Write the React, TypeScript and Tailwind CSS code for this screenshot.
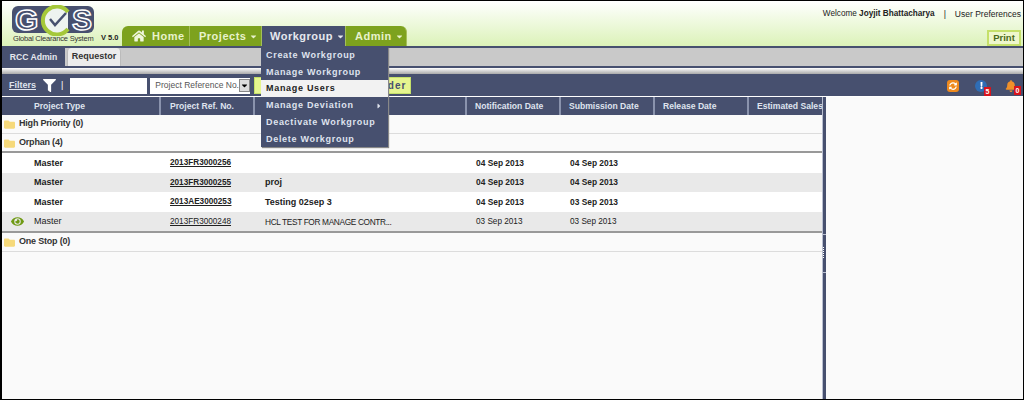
import { FaBell, FaCaretDown, FaCaretRight, FaExclamation, FaEye, FaFilter, FaFolder, FaHome, FaSyncAlt } from 'react-icons/fa';

const menuItems = ['Create Workgroup', 'Manage Workgroup', 'Manage Users', 'Manage Deviation', 'Deactivate Workgroup', 'Delete Workgroup'];

const columns = ['Project Type', 'Project Ref. No.', '', 'Notification Date', 'Submission Date', 'Release Date', 'Estimated Sales'];

const rows = [
  { type: 'Master', ref: '2013FR3000256', title: '', notified: '04 Sep 2013', submitted: '04 Sep 2013', bold: true },
  { type: 'Master', ref: '2013FR3000255', title: 'proj', notified: '04 Sep 2013', submitted: '04 Sep 2013', bold: true },
  { type: 'Master', ref: '2013AE3000253', title: 'Testing 02sep 3', notified: '04 Sep 2013', submitted: '03 Sep 2013', bold: true },
  { type: 'Master', ref: '2013FR3000248', title: 'HCL TEST FOR MANAGE CONTR...', notified: '03 Sep 2013', submitted: '03 Sep 2013', bold: false, seen: true },
];

const gridCols = 'grid grid-cols-[159px_94px_212px_94px_94px_94px_73px]';

function Logo() {
  return (
    <div className="w-[94px] pl-[10px] pt-[5px] shrink-0">
      <div className="relative w-[82px] h-[27px] bg-[#47506f] rounded-[6px] flex items-center justify-between pl-[3px] pr-[2px] text-transparent font-bold text-[30px] leading-none [-webkit-text-stroke:1.5px_#fff]">
        <span>G</span>
        <span>S</span>
        <svg className="absolute left-[27px] -top-[1px]" width="33" height="31" viewBox="0 0 33 31">
          <path d="M29 7A14 14 0 1 0 29 24" fill="#eef3f0" stroke="#a5c83a" strokeWidth="4" />
          <path d="M11 14l5 6 11-12" fill="none" stroke="#47506f" strokeWidth="2.5" />
        </svg>
      </div>
      <div className="text-[7.5px] leading-[9px] mt-[1px] ml-[1px] tracking-[-0.2px] text-[#333] whitespace-nowrap">Global Clearance System</div>
    </div>
  );
}

function NavTab({ label, active, caret, className }: { label: string; active?: boolean; caret?: boolean; className?: string }) {
  return (
    <div className={`h-[20px] flex items-center font-bold text-[11px] tracking-[0.5px] border-r border-[#a5bf5a] ${active ? 'bg-[#47506f] text-[#e6e8ee]' : 'bg-[#7da21e] text-[#e8f2cc]'} ${className ?? ''}`}>
      {label === 'Home' && <FaHome className="mr-[6px] text-[#f0f6dc]" size={14} />}
      {label}
      {caret && <FaCaretDown className="ml-[3px]" size={9} />}
    </div>
  );
}

function GroupRow({ label }: { label: string }) {
  return (
    <div className="h-[19px] flex items-center pl-[2px] gap-[4px] border-b border-[#dcdcdc] bg-[#fafafa] text-[9px] tracking-[-0.2px] font-bold text-[#333]">
      <FaFolder className="text-[#f6d97a]" size={11} />
      {label}
    </div>
  );
}

export default function App() {
  return (
    <div className="w-[1024px] h-[400px] overflow-hidden flex flex-col relative border border-l-2 border-black bg-white font-['Liberation_Sans',sans-serif] text-[9px] text-[#222]">
      <div className="h-[45px] shrink-0 flex bg-gradient-to-b from-white to-[#dcf2b8]">
        <Logo />
        <div className="text-[7.5px] font-bold self-end mb-[3px] w-[26px] pl-[5px] whitespace-nowrap">V 5.0</div>
        <div className="flex self-end">
          <NavTab label="Home" className="w-[68px] pl-[10px] rounded-tl-[6px]" />
          <NavTab label="Projects" caret className="w-[72px] pl-[9px]" />
          <NavTab label="Workgroup" caret active className="w-[84px] pl-[8px]" />
          <NavTab label="Admin" caret className="w-[61px] pl-[9px] rounded-tr-[6px]" />
        </div>
        <div className="ml-auto flex flex-col items-end justify-between pr-[2px] pt-[7px]">
          <div className="flex items-center gap-[9px] text-[8.5px] text-[#222]">
            <span className="text-[8.2px]">Welcome <b>Joyjit Bhattacharya</b></span>
            <span>|</span>
            <span>User Preferences</span>
          </div>
          <div className="h-[16px] w-[34px] border-2 border-[#c5e06a] bg-[#eef7cc] text-[9.5px] font-bold text-[#4a6a1a] flex items-center justify-center">Print</div>
        </div>
      </div>

      <div className="h-[22px] shrink-0 flex bg-[#c9c9c9] border-y-2 border-[#47506f]">
        <div className="w-[63px] bg-[#47506f] text-[#e6e8ee] font-bold text-[8.6px] flex items-center justify-center">RCC Admin</div>
        <div className="w-[54px] bg-[#ececec] rounded-t-[4px] ml-[2px] border-x border-[#bbb] font-bold flex items-center justify-center text-[#333]">Requestor</div>
      </div>
      <div className="h-[6px] shrink-0 bg-gradient-to-b from-white to-[#aaa]" />

      <div className="h-[23px] shrink-0 flex items-center bg-[#47506f] pl-[7px] pt-[1px] border-b border-white">
        <span className="underline text-[#dfe3ee] font-bold w-[34px]">Filters</span>
        <FaFilter className="text-white" size={13} />
        <span className="text-white ml-[5px]">|</span>
        <div className="h-[16px] w-[77px] bg-white ml-[7px]" />
        <div className="h-[16px] w-[100px] bg-white ml-[3px] flex items-center pl-[5px] justify-between pr-[1px] text-[8.5px] whitespace-nowrap text-[#555]">
          Project Reference No.
          <div className="w-[13px] h-[13px] bg-[#ddd] border border-[#888] flex items-center justify-center text-black"><FaCaretDown size={9} /></div>
        </div>
        <div className="h-[17px] w-[157px] ml-[4px] bg-[#e6f58f] border border-[#c5e06a] flex items-center justify-end pr-[4px] text-[10px] font-bold tracking-[1px] text-[#47506f]">Reorder</div>
        <div className="ml-auto flex items-center pr-[6px]">
          <div className="w-[12px] h-[12px] rounded-[3px] bg-[#ee8a1e] text-white flex items-center justify-center"><FaSyncAlt size={8} /></div>
          <div className="relative w-[12px] h-[12px] rounded-full bg-[#2f6db5] text-white flex items-center justify-center ml-[16px]">
            <FaExclamation size={7} />
            <span className="absolute -right-[4px] -bottom-[4px] w-[7px] h-[9px] bg-[#d8141c] text-[7px] leading-[9px] text-center font-bold">5</span>
          </div>
          <div className="relative ml-[18px]">
            <FaBell className="text-[#f0902a]" size={12} />
            <span className="absolute -right-[4px] -bottom-[3px] w-[7px] h-[9px] bg-[#d8141c] text-white text-[7px] leading-[9px] text-center font-bold">0</span>
          </div>
        </div>
      </div>

      <div className="flex-1 flex min-h-0">
        <div className="w-[820px] shrink-0 overflow-hidden bg-[#fafafa]">
          <div className={`${gridCols} h-[18px] bg-[#47506f] text-[#dfe3ee] text-[8.6px] font-bold`}>
            {columns.map((c, i) => (
              <div key={i} className={`flex items-center whitespace-nowrap overflow-hidden ${i < 6 ? 'border-r-2 border-[#8a93ad]' : ''} ${i === 0 ? 'pl-[32px]' : i === 1 ? 'pl-[9px]' : 'pl-[8px]'}`}>{c}</div>
            ))}
          </div>
          <GroupRow label="High Priority (0)" />
          <GroupRow label="Orphan (4)" />
          <div className="border-y-2 border-[#999] -mt-[2px]">
            {rows.map((r, i) => (
              <div key={r.ref} className={`${gridCols} h-[19.5px] pt-[1px] items-center ${i % 2 ? 'bg-[#e9e9e9]' : 'bg-white'} ${r.bold ? 'font-bold' : ''}`}>
                <div className="flex items-center">
                  <div className="w-[32px] pl-[9px]">{r.seen && <FaEye className="text-[#6f9a14]" size={13} />}</div>
                  {r.type}
                </div>
                <div className="pl-[9px] underline text-[8.2px]">{r.ref}</div>
                <div className={`pl-[10px] whitespace-nowrap ${r.bold ? '' : 'text-[8.3px] tracking-[-0.35px]'}`}>{r.title}</div>
                <div className={`pl-[9px] ${r.bold ? 'text-[8.4px]' : 'text-[8.2px]'}`}>{r.notified}</div>
                <div className={`pl-[9px] ${r.bold ? 'text-[8.4px]' : 'text-[8.2px]'}`}>{r.submitted}</div>
                <div />
                <div />
              </div>
            ))}
          </div>
          <GroupRow label="One Stop (0)" />
        </div>
        <div className="w-[4px] shrink-0 bg-[#47506f] border-l border-[#b9bfd0] relative">
          <div className="absolute left-0 top-[137px] w-full h-[1px] bg-[#b9bfd0]" />
          <div className="absolute left-[0px] top-[150px] w-[1px] h-[11px] border-l border-dotted border-white" />
          <div className="absolute left-0 top-[175px] w-full h-[1px] bg-[#b9bfd0]" />
        </div>
        <div className="flex-1 bg-[#fafafa]" />
      </div>

      <div className="absolute left-[259px] top-[46px] w-[127px] bg-[#47506f] shadow-[1px_1px_1px_#888] text-[#dfe3ee] font-bold tracking-[0.7px] text-[9px]">
        {menuItems.map((m, i) => (
          <div key={m} className={`h-[16.7px] flex items-center justify-between pl-[5px] pr-[5px] pt-[1px] whitespace-nowrap ${i === 2 ? 'bg-[#f2f2f2] text-[#222]' : ''}`}>
            {m}
            {i === 3 && <FaCaretRight size={8} />}
          </div>
        ))}
      </div>
    </div>
  );
}
